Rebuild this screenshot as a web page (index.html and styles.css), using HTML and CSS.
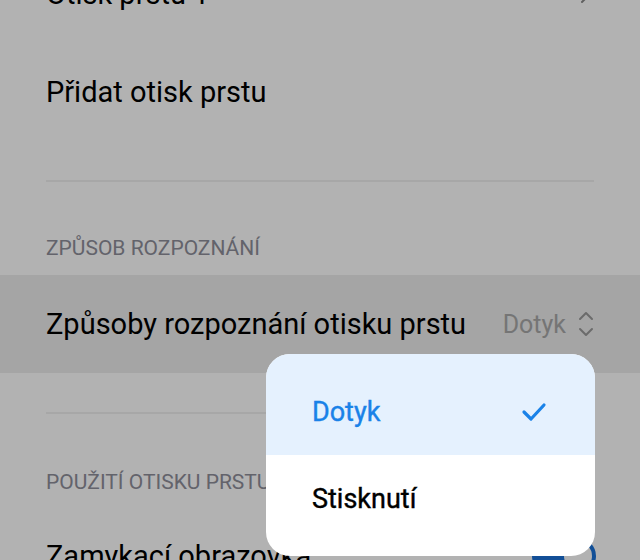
FILE: index.html
```html
<!DOCTYPE html>
<html lang="cs">
<head>
  <meta charset="UTF-8" />
  <meta name="viewport" content="width=device-width, initial-scale=1.0"/>
  <title>Otisk prstu</title>
  <link rel="stylesheet" href="styles.css">
</head>
<body>
  <div class="screen">
    <div class="settings-list">
      <div class="row">
        <span class="row-title">Otisk prstu 1</span>
        <svg class="chevron" width="12" height="20" viewBox="0 0 12 20"><path d="M2 2l8 8-8 8" fill="none" stroke="#8a8a8a" stroke-width="2" stroke-linecap="round" stroke-linejoin="round"/></svg>
      </div>
      <div class="row">
        <span class="row-title">Přidat otisk prstu</span>
      </div>

      <div class="divider"></div>

      <div class="section-label">ZPŮSOB ROZPOZNÁNÍ</div>
      <div class="row pressed">
        <span class="row-title">Způsoby rozpoznání otisku prstu</span>
        <span class="row-value">Dotyk</span>
        <svg class="updown" width="16" height="28" viewBox="0 0 16 28"><path d="M2 9l6-6 6 6M2 19l6 6 6-6" fill="none" stroke="#9a9a9a" stroke-width="2" stroke-linecap="round" stroke-linejoin="round"/></svg>
      </div>

      <div class="divider"></div>

      <div class="section-label second">POUŽITÍ OTISKU PRSTU</div>
      <div class="row">
        <span class="row-title">Zamykací obrazovka</span>
        <span class="toggle on"><span class="knob"></span></span>
      </div>
    </div>

    <div class="dim"></div>

    <div class="popup-menu">
      <div class="menu-item selected">
        <span>Dotyk</span>
        <svg width="26" height="22" viewBox="0 0 26 22"><path d="M3 11l7 7L23 4" fill="none" stroke="#1a82e8" stroke-width="3.2" stroke-linecap="round" stroke-linejoin="round"/></svg>
      </div>
      <div class="menu-item">
        <span>Stisknutí</span>
      </div>
    </div>
  </div>
</body>
</html>
```

FILE: styles.css
```css
:root {
  --accent: #1a82e8;
  --text: #000000;
  --label: #8e8e9a;
  --divider: #efefef;
}

* {
  margin: 0;
  padding: 0;
  box-sizing: border-box;
}

body {
  font-family: Roboto, "Noto Sans", sans-serif;
  background-color: #ffffff;
  color: var(--text);
}

.screen {
  position: relative;
  width: 640px;
  height: 560px;
  overflow: hidden;
}

/* list is scrolled, first row half out of view */
.settings-list {
  margin-top: -55px;
}

.row {
  display: flex;
  align-items: center;
  height: 98px;
  padding: 0 46px;
}

.row-title {
  flex: 1;
  font-size: 29px;
  white-space: nowrap;
}

.row.pressed {
  background-color: #ececec;
}

.row-value {
  font-size: 25px;
  color: #a8a8a8;
  margin-right: 12px;
}

.chevron {
  margin-right: 2px;
}

.divider {
  height: 2px;
  margin: 39px 46px 0;
  background-color: var(--divider);
}

.section-label {
  padding: 53px 46px 14px;
  font-size: 21px;
  line-height: 26px;
  color: var(--label);
}

.section-label.second {
  padding: 55px 46px 12px;
}

.toggle {
  width: 64px;
  height: 36px;
  border-radius: 18px;
  background-color: #1a72d8;
  display: flex;
  align-items: center;
  justify-content: flex-end;
  padding: 4px;
  margin-right: -2px;
}

.knob {
  width: 28px;
  height: 28px;
  border-radius: 50%;
  background-color: #ffffff;
}

.dim {
  position: absolute;
  inset: 0;
  background-color: rgba(0, 0, 0, 0.3);
}

.popup-menu {
  position: absolute;
  left: 266px;
  top: 354px;
  width: 329px;
  border-radius: 24px;
  overflow: hidden;
  background-color: #ffffff;
}

.menu-item {
  display: flex;
  align-items: center;
  justify-content: space-between;
  height: 101px;
  padding: 0 48px 0 46px;
  font-size: 27px;
  -webkit-text-stroke: 0.4px currentColor;
}

.menu-item:first-child {
  padding-top: 14px;
}

.menu-item:last-child {
  padding-bottom: 14px;
}

.menu-item.selected {
  background-color: #e5f1fe;
  color: var(--accent);
}
```
